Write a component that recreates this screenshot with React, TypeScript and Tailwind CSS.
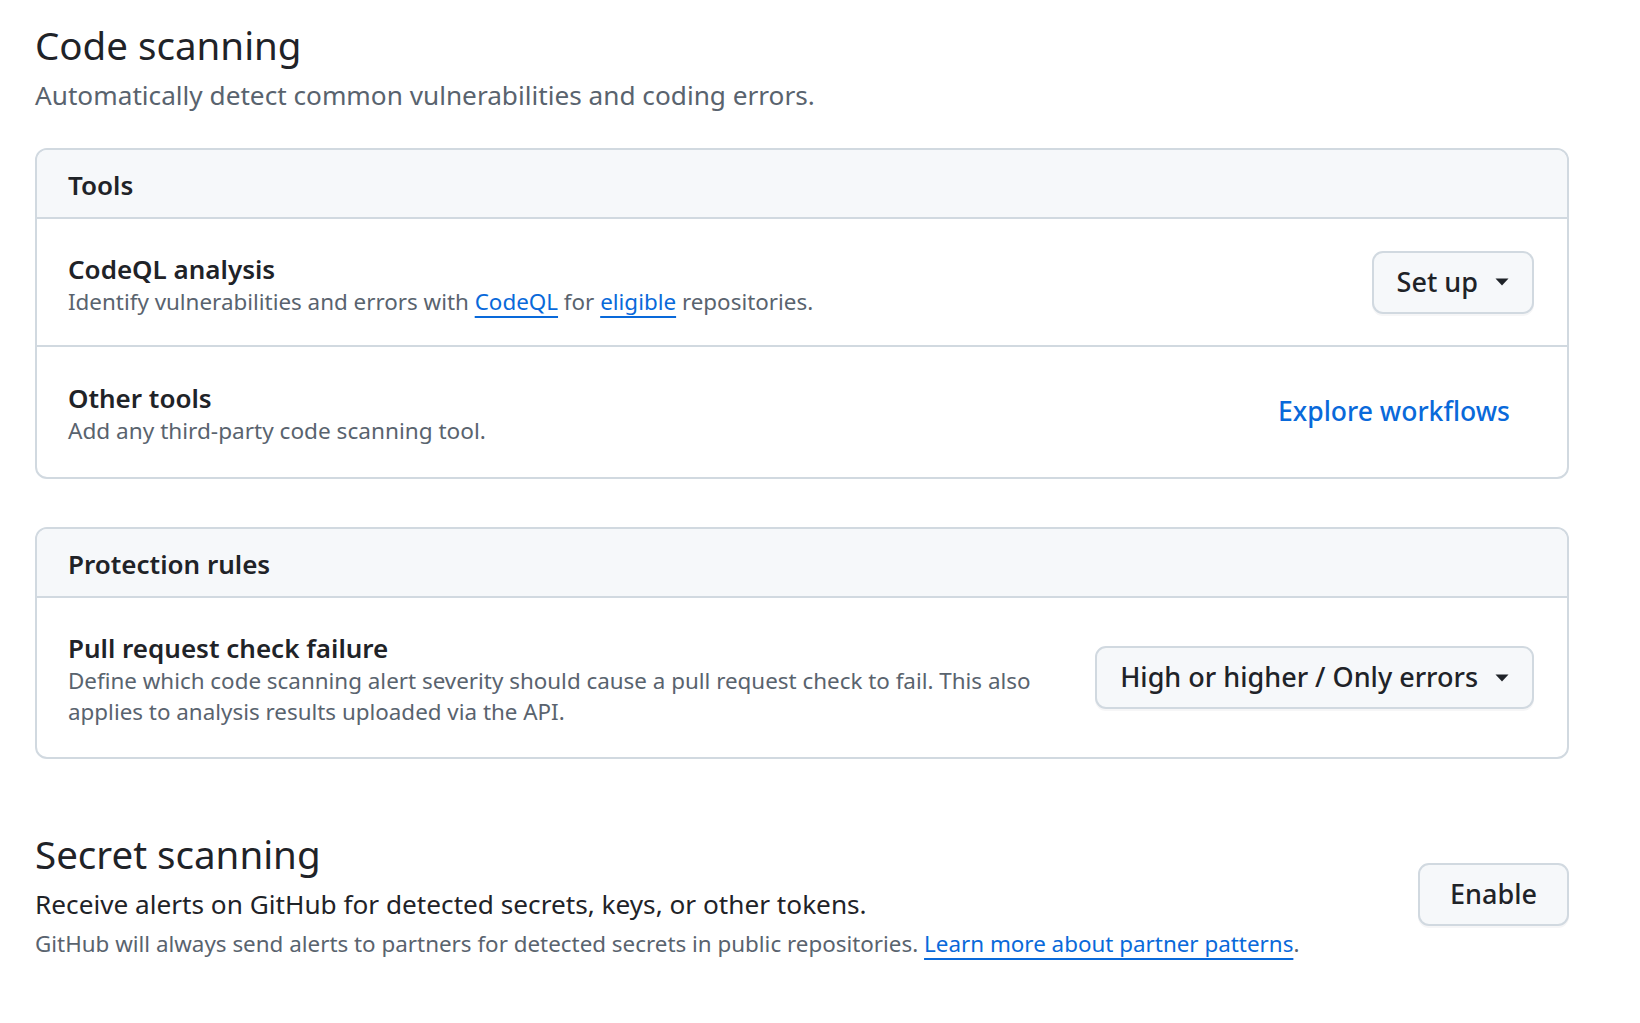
import React from "react";

const font = { fontFamily: '"Noto Sans", "Open Sans", sans-serif' };

function Caret() {
  return (
    <svg width="14" height="8" viewBox="0 0 14 8" className="shrink-0">
      <path d="M0.5 0.5 L13.5 0.5 L7 7.5 Z" fill="#1f2328" />
    </svg>
  );
}

function Btn({ children, caret, wide }: { children: React.ReactNode; caret?: boolean; wide?: boolean }) {
  return (
    <button
      className={
        "flex h-[63px] shrink-0 items-center gap-[17px] rounded-[11px] border-2 border-[#d1d9e0] bg-[#f6f8fa] text-[27px] font-medium text-[#1f2328] shadow-[0_2px_0_rgba(31,35,40,0.04)] " +
        (wide ? "px-[30px]" : "px-[23px]")
      }
    >
      <span>{children}</span>
      {caret && <Caret />}
    </button>
  );
}

const link = "text-[#0969da] underline decoration-2 underline-offset-[6px]";

export default function App() {
  return (
    <div style={font} className="min-h-screen bg-white pl-[35px] pr-[71px] pt-[19px] text-[#1f2328]">
      <h2 className="text-[38.5px] leading-[52px] font-normal">Code scanning</h2>
      <p className="mt-[7px] text-[26.2px] leading-[34px] text-[#59636e]">
        Automatically detect common vulnerabilities and coding errors.
      </p>

      <div className="mt-[36px] rounded-[12px] border-2 border-[#d1d9e0]">
        <div className="flex h-[69px] items-center rounded-t-[10px] border-b-2 border-[#d1d9e0] bg-[#f6f8fa] px-[31px] pt-[4px]">
          <h3 className="text-[26px] font-semibold">Tools</h3>
        </div>
        <div className="flex h-[128px] items-center justify-between border-b-2 border-[#d1d9e0] pl-[31px] pr-[33px]">
          <div className="pt-[4px]">
            <div className="text-[26px] font-semibold leading-[34px]">CodeQL analysis</div>
            <div className="text-[22.4px] leading-[31px] text-[#59636e]">
              Identify vulnerabilities and errors with <a className={link}>CodeQL</a> for{" "}
              <a className={link}>eligible</a> repositories.
            </div>
          </div>
          <Btn caret>Set up</Btn>
        </div>
        <div className="flex h-[130px] items-center justify-between pl-[31px] pr-[57px]">
          <div className="pt-[2px]">
            <div className="text-[26px] font-semibold leading-[34px]">Other tools</div>
            <div className="text-[22.6px] leading-[31px] text-[#59636e]">Add any third-party code scanning tool.</div>
          </div>
          <a className="text-[26.5px] font-medium text-[#0969da]">Explore workflows</a>
        </div>
      </div>

      <div className="mt-[48px] rounded-[12px] border-2 border-[#d1d9e0]">
        <div className="flex h-[69px] items-center rounded-t-[10px] border-b-2 border-[#d1d9e0] bg-[#f6f8fa] px-[31px] pt-[4px]">
          <h3 className="text-[26px] font-semibold">Protection rules</h3>
        </div>
        <div className="flex h-[159px] items-center justify-between gap-[30px] pl-[31px] pr-[33px]">
          <div className="max-w-[1000px] pt-[2px]">
            <div className="text-[26px] font-semibold leading-[34px]">Pull request check failure</div>
            <div className="text-[22.4px] leading-[31px] text-[#59636e]">
              Define which code scanning alert severity should cause a pull request check to fail. This also applies to analysis results uploaded via the API.
            </div>
          </div>
          <Btn caret>High or higher / Only errors</Btn>
        </div>
      </div>

      <div className="mt-[69px] flex items-center justify-between">
        <div>
          <h2 className="text-[38.5px] leading-[52px] font-normal">Secret scanning</h2>
          <p className="mt-[6px] text-[26.2px] leading-[36px] text-[#1f2328]">
            Receive alerts on GitHub for detected secrets, keys, or other tokens.
          </p>
          <p className="mt-[6px] text-[22.4px] leading-[32px] text-[#59636e]">
            GitHub will always send alerts to partners for detected secrets in public repositories.{" "}
            <a className={link}>Learn more about partner patterns</a>.
          </p>
        </div>
        <Btn wide>Enable</Btn>
      </div>
    </div>
  );
}
